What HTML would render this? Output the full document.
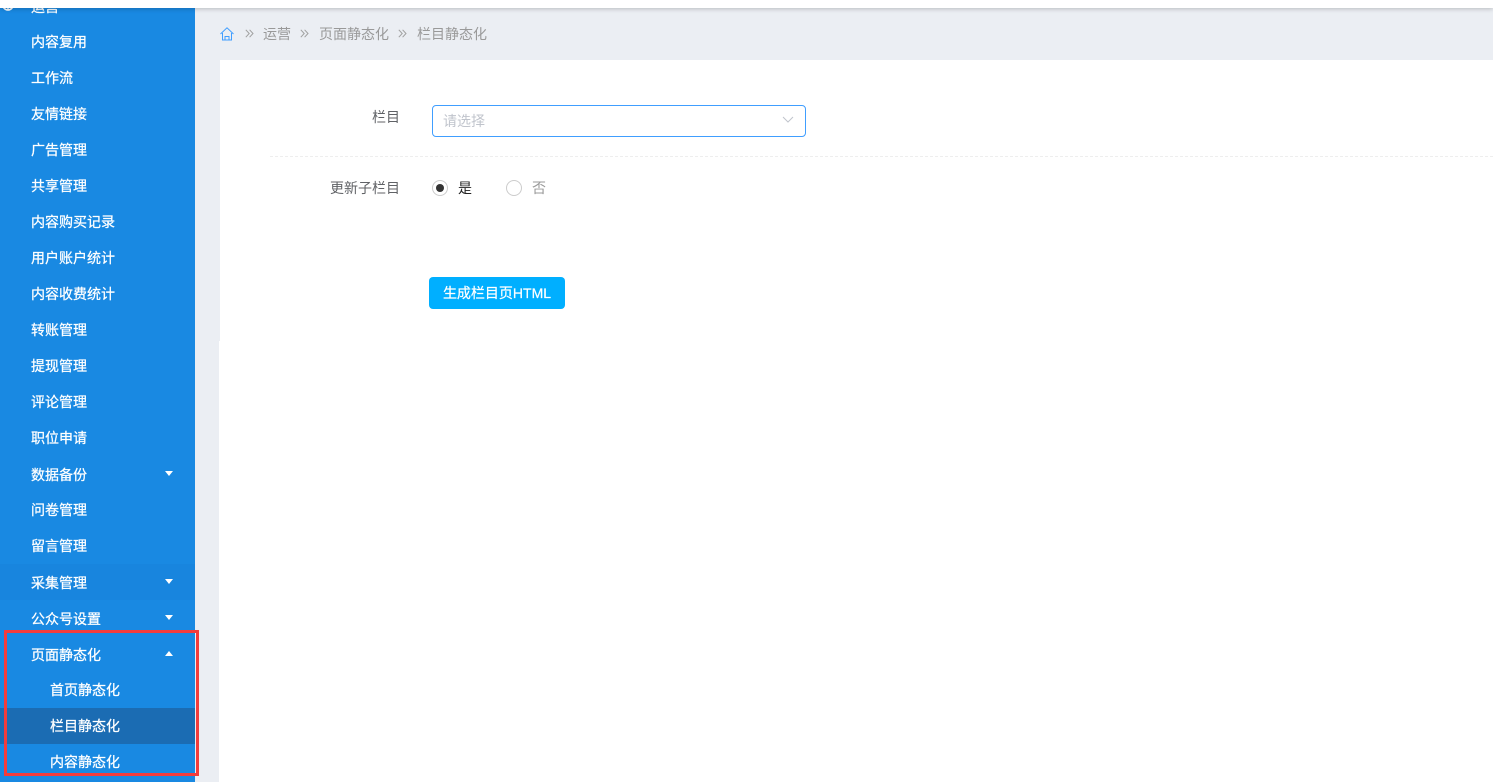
<!DOCTYPE html>
<html lang="zh-CN">
<head>
<meta charset="utf-8">
<title>栏目静态化</title>
<style>
html,body{margin:0;padding:0;width:1493px;height:782px;overflow:hidden;background:#fff;font-family:"Liberation Sans","Noto Sans CJK SC",sans-serif;}
#bg{position:absolute;left:195px;top:0;width:1298px;height:782px;background:#ebeef3;}
#side{position:absolute;left:0;top:0;width:195px;height:782px;background:#1989e2;overflow:hidden;}
.it{position:absolute;left:31px;font-size:14px;line-height:20px;color:#fff;white-space:nowrap;-webkit-text-stroke:.25px #fff;}
.sub{left:50px;}
.arr{position:absolute;left:165px;width:0;height:0;border-left:4px solid transparent;border-right:4px solid transparent;border-top:5px solid #fff;}
.up{border-top:0;border-bottom:5px solid #fff;}
#active{position:absolute;left:0;top:708px;width:195px;height:36px;background:#1b6cb3;}
#dark1{position:absolute;left:0;top:564px;width:195px;height:36px;background:#1885de;}
#top{position:absolute;left:0;top:0;width:1493px;height:8px;background:#fff;box-shadow:0 1px 5px rgba(0,0,0,.22);z-index:3;}
#card1{position:absolute;left:220px;top:60px;width:1273px;height:281px;background:#fff;}
#card2{position:absolute;left:219px;top:341px;width:1274px;height:441px;background:#fff;}
.bc{position:absolute;top:24px;font-size:14px;line-height:20px;color:#999;white-space:nowrap;}
.sep{position:absolute;top:29px;}
.lb{position:absolute;font-size:14px;line-height:20px;color:#606266;white-space:nowrap;}
#sel{position:absolute;left:432px;top:105px;width:372px;height:30px;border:1px solid #409eff;border-radius:4px;background:#fff;}
#ph{position:absolute;left:443px;top:111px;font-size:14px;line-height:20px;color:#c0c4cc;}
#dash{position:absolute;left:270px;top:156px;width:1223px;border-top:1px dashed #eee;}
.radio{position:absolute;top:180px;width:14px;height:14px;border:1px solid #ccc;border-radius:50%;background:#fff;}
#dot{position:absolute;left:436px;top:184px;width:8px;height:8px;border-radius:50%;background:#333;}
#btn{position:absolute;left:429px;top:277px;width:136px;height:32px;background:#00afff;border-radius:4px;color:#fff;font-size:14px;line-height:32px;text-align:center;-webkit-text-stroke:.2px #fff;}
#red{position:absolute;left:4px;top:630px;width:189px;height:140px;border:3px solid #f33c3c;z-index:4;}
</style>
</head>
<body>
<div id="bg"></div>
<div id="side">
  <div id="dark1"></div>
  <div id="active"></div>
  <svg style="position:absolute;left:1px;top:0" width="16" height="14" viewBox="0 0 16 14"><circle cx="7" cy="5" r="5" fill="none" stroke="#fff" stroke-width="1.6"/><path d="M2 5h10M7 5v5" stroke="#fff" stroke-width="1.4"/></svg>
  <div class="it" style="top:-3px">运营</div>
  <div class="it" style="top:32px">内容复用</div>
  <div class="it" style="top:68px">工作流</div>
  <div class="it" style="top:104px">友情链接</div>
  <div class="it" style="top:140px">广告管理</div>
  <div class="it" style="top:176px">共享管理</div>
  <div class="it" style="top:212px">内容购买记录</div>
  <div class="it" style="top:248px">用户账户统计</div>
  <div class="it" style="top:284px">内容收费统计</div>
  <div class="it" style="top:320px">转账管理</div>
  <div class="it" style="top:356px">提现管理</div>
  <div class="it" style="top:392px">评论管理</div>
  <div class="it" style="top:428px">职位申请</div>
  <div class="it" style="top:465px">数据备份</div><div class="arr" style="top:471px"></div>
  <div class="it" style="top:500px">问卷管理</div>
  <div class="it" style="top:536px">留言管理</div>
  <div class="it" style="top:573px">采集管理</div><div class="arr" style="top:579px"></div>
  <div class="it" style="top:609px">公众号设置</div><div class="arr" style="top:615px"></div>
  <div class="it" style="top:645px">页面静态化</div><div class="arr up" style="top:651px"></div>
  <div class="it sub" style="top:680px">首页静态化</div>
  <div class="it sub" style="top:716px">栏目静态化</div>
  <div class="it sub" style="top:752px">内容静态化</div>
</div>
<div id="top"></div>

<svg style="position:absolute;left:220px;top:27px" width="14" height="14" viewBox="0 0 14 14" fill="none" stroke="#409eff" stroke-width="1"><path d="M.5 7L7 .8 13.5 7"/><path d="M2.5 6v7h9V6"/><path d="M5 13V9.5h4V13"/></svg>
<svg class="sep" style="left:245px" width="9" height="9" viewBox="0 0 9 9" fill="none" stroke="#a0a0a0" stroke-width="1"><path d="M.8 .8l3.4 3.7-3.4 3.7M4.6 .8l3.4 3.7-3.4 3.7"/></svg>
<div class="bc" style="left:263px">运营</div>
<svg class="sep" style="left:300px" width="9" height="9" viewBox="0 0 9 9" fill="none" stroke="#a0a0a0" stroke-width="1"><path d="M.8 .8l3.4 3.7-3.4 3.7M4.6 .8l3.4 3.7-3.4 3.7"/></svg>
<div class="bc" style="left:319px">页面静态化</div>
<svg class="sep" style="left:398px" width="9" height="9" viewBox="0 0 9 9" fill="none" stroke="#a0a0a0" stroke-width="1"><path d="M.8 .8l3.4 3.7-3.4 3.7M4.6 .8l3.4 3.7-3.4 3.7"/></svg>
<div class="bc" style="left:417px">栏目静态化</div>

<div id="card1"></div>
<div id="card2"></div>

<div class="lb" style="left:372px;top:107px">栏目</div>
<div id="sel"></div>
<div id="ph">请选择</div>
<svg style="position:absolute;left:782px;top:116px" width="12" height="8" viewBox="0 0 12 8" fill="none" stroke="#c0c4cc" stroke-width="1"><path d="M1 1l5 5 5-5"/></svg>
<div id="dash"></div>

<div class="lb" style="left:330px;top:178px">更新子栏目</div>
<div class="radio" style="left:432px"></div>
<div id="dot"></div>
<div class="lb" style="left:458px;top:178px;color:#222">是</div>
<div class="radio" style="left:506px"></div>
<div class="lb" style="left:532px;top:178px;color:#999">否</div>

<div id="btn">生成栏目页HTML</div>
<div id="red"></div>
</body>
</html>
